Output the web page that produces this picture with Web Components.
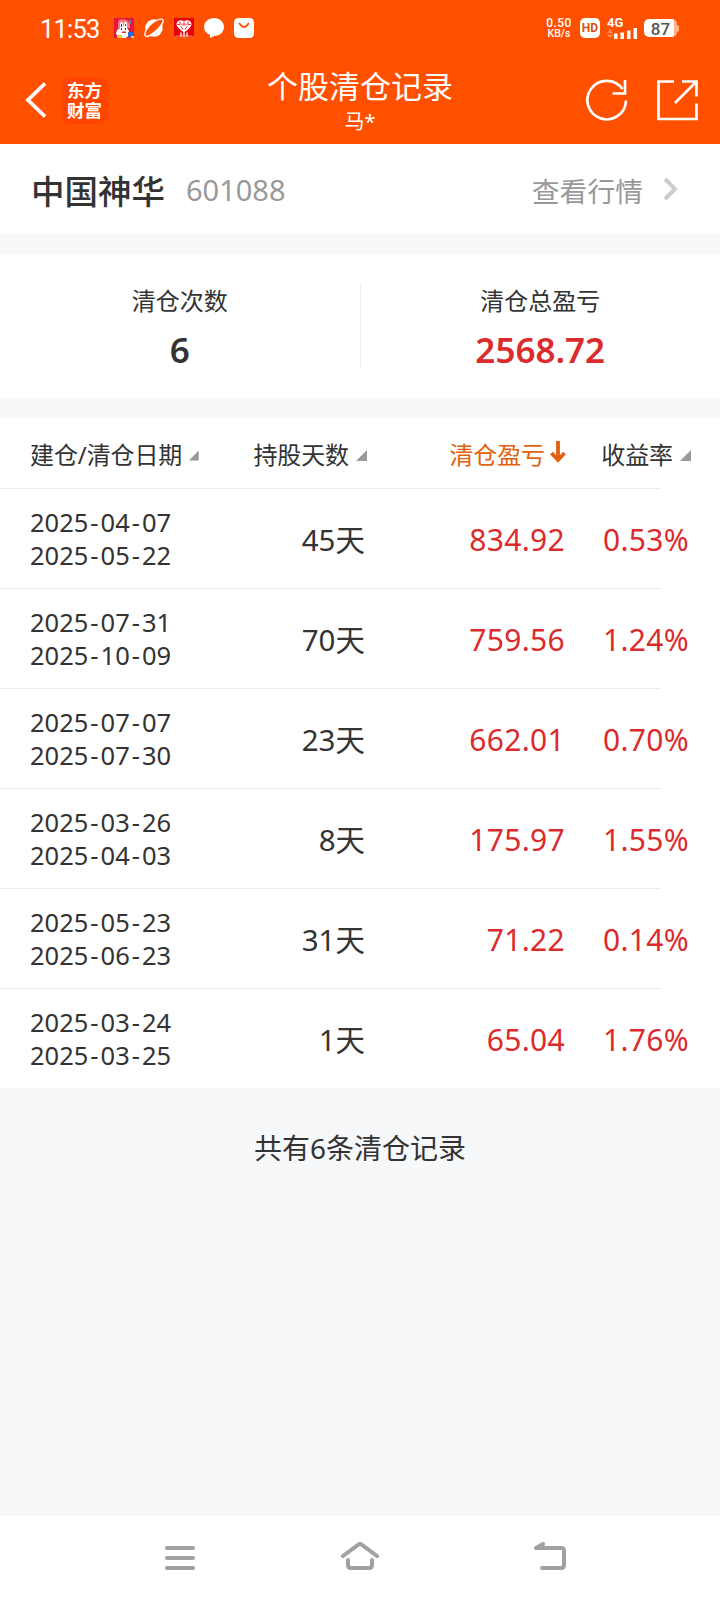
<!DOCTYPE html>
<html lang="zh-CN">
<head>
<meta charset="UTF-8">
<title>个股清仓记录</title>
<style>
    body {
        margin: 0;
        width: 720px;
        background: #f6f8fa;
        color: #333;
        font-family: "Noto Sans", "Noto Sans CJK SC", sans-serif;
    }
</style>
</head>
<body>
<clear-page></clear-page>

<script>
const define = (name, html, setup) => {
    const template = document.createElement("template");
    template.innerHTML = html;
    customElements.define(name, class extends HTMLElement {
        constructor() {
            super();
            this.attachShadow({ mode: "open" });
            this.shadowRoot.appendChild(template.content.cloneNode(true));
        }
        connectedCallback() {
            if (setup) setup(this, this.shadowRoot);
        }
    });
};

define("status-bar", /*html*/ `
    <style>
        :host {
            display: flex;
            align-items: center;
            box-sizing: border-box;
            height: 56px;
            padding: 0 41px 0 40px;
            color: #fff;
        }
        .time {
            width: 74px;
            font: 25.5px/30px Roboto, sans-serif;
            letter-spacing: -0.8px;
            padding-top: 1px;
            box-sizing: border-box;
            white-space: nowrap;
        }
        .apps {
            display: flex;
            gap: 10px;
            flex: 1;
        }
        svg { display: block; }
        .speed {
            width: 30px;
            margin-right: 6px;
            text-align: center;
            font: 500 12px/11px Roboto, sans-serif;
            letter-spacing: 0.4px;
            white-space: nowrap;
        }
        .speed div:last-child { font-size: 10.5px; line-height: 10px; letter-spacing: 0; }
        .hd {
            width: 20px;
            height: 20px;
            margin-right: 7px;
            border-radius: 5px;
            background: #fff;
            color: #d8500e;
            font: bold 12px/20px Roboto, sans-serif;
            text-align: center;
        }
        .net { width: 31px; margin-right: 6px; }
        .net div { font: bold 13px/10px Roboto, sans-serif; }
        .battery { display: flex; align-items: center; }
        .level {
            width: 33px;
            height: 18px;
            border-radius: 5px;
            background: linear-gradient(90deg, #fff 30px, #ffb18c 30px);
            color: #555;
            font: 500 17px/20px Roboto, sans-serif;
            text-align: center;
        }
        .cap { width: 2px; height: 7px; background: #ffb18c; border-radius: 0 2px 2px 0; }
    </style>
    <div class="time">11:53</div>
    <div class="apps">
        <svg width="20" height="20" viewBox="0 0 20 20">
            <path fill="#e3173e" d="M0 0h20v20H0z"/>
            <path fill="#f77" d="M5 2q5-2 9 1l2 4v3H4V5z"/>
            <path fill="#fff" d="M6 6q0-2 1.500-2T9 6v2h1V5q.500-1.500 1.800-1T13 6v4l2 3v4l-3 3H6l-4-4 1-4 3-2z"/>
            <path fill="#58a" d="M15 2h2v4h-2z"/>
            <path fill="#533" d="M7 10h1v2H7zM11 10h1v2h-1zM7 6h1v3H7zM11 6h1v2h-1z"/>
            <path fill="#2d6bd8" d="M14 14h5v5h-5z"/>
            <path fill="#f8c52c" d="M3 17h5v3H3zM17 18h3v2h-3z"/>
            <path fill="#d33" d="M8 13.500h4V15H8z"/>
        </svg>
        <svg width="20" height="20" viewBox="0 0 20 20">
            <circle cx="10" cy="10" r="8.7" fill="#fff"/>
            <path d="M1.500 18C-1 15.500 4 8 9 4.500s9-4 10-2.500-2 6-5 9-10 9-12.500 7z" fill="#ff5000" stroke="#fff" stroke-width="1.300"/>
            <path d="M4 13Q8 7 15 4" fill="none" stroke="#ff5000" stroke-width="2"/>
        </svg>
        <svg width="20" height="20" viewBox="0 0 20 20">
            <path fill="#e60012" d="M0 0h20v20H0z"/>
            <path fill="#f0532d" d="M0 18q10-3 20 0v2H0z"/>
            <path d="M10 14.500Q2 9 2.500 5.500 5 0 10 3.500 15 0 17.500 5.500 18 9 10 14.500z" fill="#fff"/>
            <path d="M10 4v4M6 3.500v3H3.500M14 3.500v3h2.500M7 8.500l2 3M13 8.500l-2 3M8 5.500v2M12 5.500v2" fill="none" stroke="#e60012" stroke-width=".900"/>
            <path d="M7 14.500v4M10 14v5M13 14.500v4" stroke="#fff" stroke-width="1.300"/>
        </svg>
        <svg width="20" height="20" viewBox="0 0 20 20">
            <path fill="#fff" d="M10 0c5.600 0 10 4 10 9s-4.400 9-10 9l-4 2V17C2 15.500 0 12.500 0 9c0-5 4.400-9 10-9z"/>
        </svg>
        <svg width="20" height="20" viewBox="0 0 20 20">
            <rect width="20" height="20" rx="4.500" fill="#fff"/>
            <path d="M5.500 5.500q4.500 7 9 0" fill="none" stroke="#ff5000" stroke-width="1.600" stroke-linecap="round"/>
        </svg>
    </div>
    <div class="speed"><div>0.50</div><div>KB/s</div></div>
    <div class="hd">HD</div>
    <div class="net">
        <div>4G</div>
        <svg width="31" height="11" viewBox="0 0 31 11">
            <path fill="#ff8a55" d="M0 5l3-4 3 4zM0 6.500h6l-3 4z"/>
            <path fill="#fff" d="M7 5.500h3.500V11H7zM13.500 4.500H17V11h-3.500zM20 2.500h3.500V11H20zM26.500 0H30v11h-3.500z"/>
        </svg>
    </div>
    <div class="battery"><div class="level">87</div><div class="cap"></div></div>
`);

define("title-bar", /*html*/ `
    <style>
        :host {
            display: grid;
            grid-template-columns: 220px 1fr 220px;
            height: 88px;
            color: #fff;
        }
        svg { display: block; }
        .left, .right { display: flex; align-items: center; }
        .left { padding-left: 25px; gap: 14px; }
        .right { justify-content: flex-end; padding-right: 22px; gap: 28px; }
        .logo {
            width: 47px;
            height: 47px;
            box-sizing: border-box;
            padding-top: 3px;
            border-radius: 9px;
            background: #ff4500;
            text-align: center;
            font: bold 17.500px/20px "Noto Sans CJK SC", sans-serif;
        }
        .logo div { height: 20px; }
        .middle { text-align: center; }
        .title { padding-top: 9px; font-size: 31px; line-height: 42px; white-space: nowrap; }
        .name { padding-top: 1px; font-size: 20px; line-height: 28px; }
    </style>
    <div class="left">
        <svg width="22" height="36" viewBox="0 0 22 36"><path d="M20 1.500L3 18l17 16.500" fill="none" stroke="#fff" stroke-width="3.800"/></svg>
        <div class="logo"><div>东方</div><div>财富</div></div>
    </div>
    <div class="middle">
        <div class="title"><slot></slot></div>
        <div class="name"><slot name="name"></slot></div>
    </div>
    <div class="right">
        <svg width="42" height="42" viewBox="0 0 42 42" fill="none" stroke="#fff" stroke-width="2.700">
            <path d="M40 21.500A19.300 19.300 0 1 1 36.500 10"/>
            <path d="M39 1v13.500H26.500"/>
        </svg>
        <svg width="42" height="42" viewBox="0 0 42 42" fill="none" stroke="#fff" stroke-width="2.700">
            <path d="M18 2.500H2.500v37.500h38V24.500M26 2.500h14.500v15M40 3L19 24"/>
        </svg>
    </div>
`);

define("stock-bar", /*html*/ `
    <style>
        :host {
            display: flex;
            align-items: center;
            box-sizing: border-box;
            height: 90px;
            padding: 1px 42px 0 31px;
            background: #fff;
        }
        .name { font: 500 33.500px/48px "Noto Sans CJK SC", sans-serif; }
        .code { flex: 1; padding-left: 21px; font-size: 29px; color: #999; }
        .more { font-size: 27.800px; color: #999; margin-right: 20px; }
        svg { margin-top: -1px; }
    </style>
    <div class="name"><slot></slot></div>
    <div class="code"><slot name="code"></slot></div>
    <div class="more">查看行情</div>
    <svg width="15" height="24" viewBox="0 0 15 24"><path d="M2 2l10 10L2 22" fill="none" stroke="#ccc" stroke-width="4"/></svg>
`);

define("summary-cell", /*html*/ `
    <style>
        :host { display: block; flex: 1; text-align: center; }
        .label { font-size: 24px; line-height: 34px; }
        .value { font-size: 35px; line-height: 48px; font-weight: 600; margin-top: 8px; }
        :host([red]) .value { color: #dc2b2c; }
    </style>
    <div class="label"><slot></slot></div>
    <div class="value"><slot name="value"></slot></div>
`);

define("summary-card", /*html*/ `
    <style>
        :host {
            display: flex;
            box-sizing: border-box;
            height: 144px;
            margin: 20px 0;
            padding-top: 30px;
            background: #fff;
        }
        .line { width: 1px; height: 86px; margin-top: -1px; background: #eee; }
        ::slotted(*) { flex: 1; }
    </style>
    <slot name="count"></slot>
    <div class="line"></div>
    <slot name="total"></slot>
`);

define("sort-head", /*html*/ `
    <style>
        :host {
            display: flex;
            align-items: center;
            justify-content: flex-end;
            font-size: 24px;
            line-height: 34px;
            letter-spacing: -0.1px;
            white-space: nowrap;
        }
        svg { margin-left: 7px; }
        .down { display: none; }
        :host([active]) { color: #e2600f; }
        :host([active]) .down { display: block; margin: -7px 0 0 5px; }
        :host([active]) .tri { display: none; }
    </style>
    <slot></slot>
    <svg class="tri" width="11" height="11" viewBox="0 0 11 11"><path fill="#999" d="M11 0v11H0z"/></svg>
    <svg class="down" width="16" height="23" viewBox="0 0 16 23"><path d="M8 1v19M1.500 13l6.500 7 6.500-7" fill="none" stroke="#e2600f" stroke-width="3.800"/></svg>
`);

define("record-row", /*html*/ `
    <style>
        :host {
            display: grid;
            grid-template-columns: 160px 175px 200px 1fr;
            align-items: center;
            height: 99px;
            padding: 0 31px 0 30px;
            border-top: 1px solid transparent;
            border-image: linear-gradient(90deg, #ececec 660px, #fff 660px) 1;
            font-size: 30px;
            text-align: right;
            white-space: nowrap;
        }
        .dates { font-size: 25.500px; line-height: 33px; text-align: left; }
        .dates i { font-style: normal; margin: 0 2px; }
        .days { padding-top: 3px; font-size: 29.500px; line-height: 40px; }
        .red { padding-top: 3px; line-height: 40px; color: #dc2b2c; letter-spacing: 0.3px; }
    </style>
    <div class="dates"><div class="from"></div><div class="to"></div></div>
    <div class="days"></div>
    <div class="red profit"></div>
    <div class="red rate"></div>
`, (host, root) => {
    for (const key of ["from", "to"]) {
        root.querySelector("." + key).innerHTML = host.getAttribute(key).replaceAll("-", "<i>-</i>");
    }
    for (const key of ["days", "profit", "rate"]) {
        root.querySelector("." + key).textContent = host.getAttribute(key);
    }
});

define("record-table", /*html*/ `
    <style>
        :host { display: block; background: #fff; }
        .head {
            display: grid;
            grid-template-columns: 169px 168px 199px 125px;
            align-items: center;
            height: 70px;
            padding: 4px 0 0 30px;
            box-sizing: border-box;
        }
    </style>
    <div class="head">
        <sort-head>建仓/清仓日期</sort-head>
        <sort-head>持股天数</sort-head>
        <sort-head active>清仓盈亏</sort-head>
        <sort-head>收益率</sort-head>
    </div>
    <slot></slot>
`);

define("nav-bar", /*html*/ `
    <style>
        :host {
            display: grid;
            grid-template-columns: 176px 1fr 176px;
            align-items: center;
            justify-items: center;
            box-sizing: border-box;
            height: 84px;
            padding: 0 82px 0 92px;
            background: #fff;
        }
        svg { fill: none; stroke: #a1a1a1; stroke-width: 4; stroke-linecap: round; stroke-linejoin: round; }
        .home { margin-left: -10px; }
    </style>
    <svg width="32" height="32" viewBox="0 0 32 32"><path d="M3 6h26M3 16h26M3 26h26"/></svg>
    <svg class="home" width="40" height="32" viewBox="0 0 40 32"><path d="M3 14L20 1.500 37 14M8 18v5q0 3 3 3h18q3 0 3-3v-5"/></svg>
    <svg width="34" height="32" viewBox="0 0 34 32"><path d="M10 2L3 6h25q3 0 3 3v14q0 3-3 3H9"/></svg>
`);

define("clear-page", /*html*/ `
    <style>
        :host { display: flex; flex-direction: column; height: 1600px; }
        header { background: #ff5000; }
        .total { flex: 1; padding-top: 40px; text-align: center; font-size: 28px; line-height: 40px; }
    </style>
    <header>
        <status-bar></status-bar>
        <title-bar>个股清仓记录<span slot="name">马*</span></title-bar>
    </header>
    <stock-bar>中国神华<span slot="code">601088</span></stock-bar>
    <summary-card>
        <summary-cell slot="count">清仓次数<span slot="value">6</span></summary-cell>
        <summary-cell slot="total" red>清仓总盈亏<span slot="value">2568.72</span></summary-cell>
    </summary-card>
    <record-table>
        <record-row from="2025-04-07" to="2025-05-22" days="45天" profit="834.92" rate="0.53%"></record-row>
        <record-row from="2025-07-31" to="2025-10-09" days="70天" profit="759.56" rate="1.24%"></record-row>
        <record-row from="2025-07-07" to="2025-07-30" days="23天" profit="662.01" rate="0.70%"></record-row>
        <record-row from="2025-03-26" to="2025-04-03" days="8天" profit="175.97" rate="1.55%"></record-row>
        <record-row from="2025-05-23" to="2025-06-23" days="31天" profit="71.22" rate="0.14%"></record-row>
        <record-row from="2025-03-24" to="2025-03-25" days="1天" profit="65.04" rate="1.76%"></record-row>
    </record-table>
    <div class="total">共有6条清仓记录</div>
    <nav-bar></nav-bar>
`);
</script>
</body>
</html>
